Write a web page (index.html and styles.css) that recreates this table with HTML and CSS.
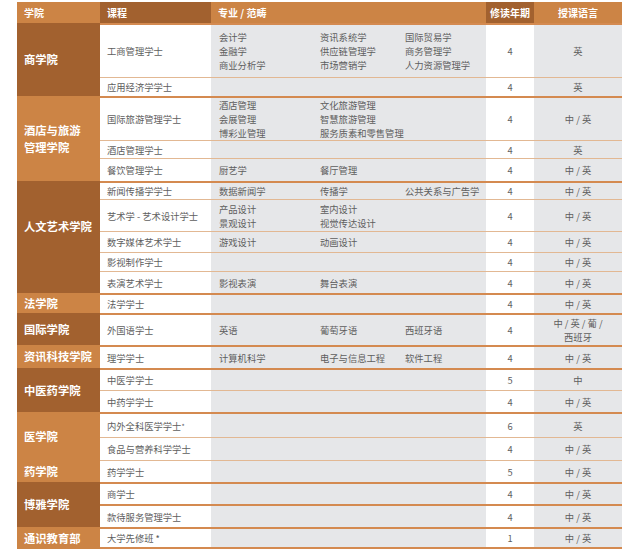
FILE: index.html
```html
<!DOCTYPE html>
<html lang="zh">
<head>
<meta charset="utf-8">
<title>课程一览</title>
<link rel="stylesheet" href="styles.css">
</head>
<body>
<div class="table">
  <div class="hd orange">学院</div>
  <div class="hd dark">课程</div>
  <div class="hd orange">专业 / 范畴</div>
  <div class="hd dark center">修读年期</div>
  <div class="hd orange center">授课语言</div>

  <div class="school dark s2">商学院</div>
  <div class="c course sep">工商管理学士</div>
  <div class="c major sep"><div class="cols"><div>会计学<br>金融学<br>商业分析学</div><div>资讯系统学<br>供应链管理学<br>市场营销学</div><div>国际贸易学<br>商务管理学<br>人力资源管理学</div></div></div>
  <div class="c yr sep">4</div>
  <div class="c lang sep">英</div>
  <div class="c course">应用经济学学士</div>
  <div class="c major"></div>
  <div class="c yr">4</div>
  <div class="c lang">英</div>

  <div class="school orange s3">酒店与旅游<br>管理学院</div>
  <div class="c course sep">国际旅游管理学士</div>
  <div class="c major sep"><div class="cols"><div>酒店管理<br>会展管理<br>博彩业管理</div><div class="nowrap">文化旅游管理<br>智慧旅游管理<br>服务质素和零售管理</div><div></div></div></div>
  <div class="c yr sep">4</div>
  <div class="c lang sep">中 / 英</div>
  <div class="c course">酒店管理学士</div>
  <div class="c major"></div>
  <div class="c yr">4</div>
  <div class="c lang">英</div>
  <div class="c course">餐饮管理学士</div>
  <div class="c major"><div class="cols"><div>厨艺学</div><div>餐厅管理</div><div></div></div></div>
  <div class="c yr">4</div>
  <div class="c lang">中 / 英</div>

  <div class="school dark s5 up">人文艺术学院</div>
  <div class="c course sep">新闻传播学学士</div>
  <div class="c major sep"><div class="cols"><div>数据新闻学</div><div>传播学</div><div>公共关系与广告学</div></div></div>
  <div class="c yr sep">4</div>
  <div class="c lang sep">中 / 英</div>
  <div class="c course">艺术学 - 艺术设计学士</div>
  <div class="c major"><div class="cols"><div>产品设计<br>景观设计</div><div>室内设计<br>视觉传达设计</div><div></div></div></div>
  <div class="c yr">4</div>
  <div class="c lang">中 / 英</div>
  <div class="c course">数字媒体艺术学士</div>
  <div class="c major"><div class="cols"><div>游戏设计</div><div>动画设计</div><div></div></div></div>
  <div class="c yr">4</div>
  <div class="c lang">中 / 英</div>
  <div class="c course">影视制作学士</div>
  <div class="c major"></div>
  <div class="c yr">4</div>
  <div class="c lang">中 / 英</div>
  <div class="c course">表演艺术学士</div>
  <div class="c major"><div class="cols"><div>影视表演</div><div>舞台表演</div><div></div></div></div>
  <div class="c yr">4</div>
  <div class="c lang">中 / 英</div>

  <div class="school orange">法学院</div>
  <div class="c course sep">法学学士</div>
  <div class="c major sep"></div>
  <div class="c yr sep">4</div>
  <div class="c lang sep">中 / 英</div>

  <div class="school dark">国际学院</div>
  <div class="c course sep">外国语学士</div>
  <div class="c major sep"><div class="cols"><div>英语</div><div>葡萄牙语</div><div>西班牙语</div></div></div>
  <div class="c yr sep">4</div>
  <div class="c lang sep">中 / 英 / 葡 /<br>西班牙</div>

  <div class="school orange">资讯科技学院</div>
  <div class="c course sep">理学学士</div>
  <div class="c major sep"><div class="cols"><div>计算机科学</div><div>电子与信息工程</div><div>软件工程</div></div></div>
  <div class="c yr sep">4</div>
  <div class="c lang sep">中 / 英</div>

  <div class="school dark s2">中医药学院</div>
  <div class="c course sep">中医学学士</div>
  <div class="c major sep"></div>
  <div class="c yr sep">5</div>
  <div class="c lang sep">中</div>
  <div class="c course">中药学学士</div>
  <div class="c major"></div>
  <div class="c yr">4</div>
  <div class="c lang">中 / 英</div>

  <div class="school orange s2">医学院</div>
  <div class="c course sep">内外全科医学学士<sup>*</sup></div>
  <div class="c major sep"></div>
  <div class="c yr sep">6</div>
  <div class="c lang sep">英</div>
  <div class="c course">食品与营养科学学士</div>
  <div class="c major"></div>
  <div class="c yr">4</div>
  <div class="c lang">中 / 英</div>

  <div class="school orange">药学院</div>
  <div class="c course">药学学士</div>
  <div class="c major"></div>
  <div class="c yr">5</div>
  <div class="c lang">中 / 英</div>

  <div class="school dark s2">博雅学院</div>
  <div class="c course sep">商学士</div>
  <div class="c major sep"></div>
  <div class="c yr sep">4</div>
  <div class="c lang sep">中 / 英</div>
  <div class="c course sep">款待服务管理学士</div>
  <div class="c major sep"></div>
  <div class="c yr sep">4</div>
  <div class="c lang sep">中 / 英</div>

  <div class="school orange">通识教育部</div>
  <div class="c course sep last">大学先修班 *</div>
  <div class="c major sep last"></div>
  <div class="c yr sep last">1</div>
  <div class="c lang sep last">中 / 英</div>
</div>
</body>
</html>
```

FILE: styles.css
```css
* { box-sizing: border-box; }

html, body {
  margin: 0;
  padding: 0;
  background: #ffffff;
}

body {
  padding: 2px 0 0 17px;
  font-family: "Noto Sans CJK SC", "Noto Sans", sans-serif;
  color: #5e5e5e;
}

.table {
  display: grid;
  width: 605px;
  grid-template-columns: 83px 111px 275px 48px 88px;
  grid-template-rows:
    21px 54px 19px 44px 18px 23px 18px 32px 21px 19px 22px
    20px 32px 23px 22px 22px 25px 23px 22px 22px 23px 22px;
}

.orange { background: #cc8445; }
.dark { background: #a2612f; }

.hd {
  display: flex;
  align-items: center;
  padding-left: 7px;
  color: #ffffff;
  font-size: 10px;
  font-weight: 700;
  white-space: nowrap;
}
.hd.center { justify-content: center; padding-left: 0; }

.school {
  display: flex;
  align-items: center;
  padding-left: 7px;
  color: #ffffff;
  font-size: 11.3px;
  font-weight: 700;
  line-height: 17px;
  white-space: nowrap;
}
.s2 { grid-row: span 2; }
.s3 { grid-row: span 3; }
.s5 { grid-row: span 5; }
.up { padding-bottom: 22px; }

.c {
  display: flex;
  align-items: center;
  font-size: 9.3px;
  line-height: 14px;
  border-top: 1px solid #e2b893;
  white-space: nowrap;
}
.c.sep { border-top: 2px solid #d48a50; }
.c.last { border-bottom: 2px solid #d48a50; }

.course { background: #ffffff; padding-left: 7px; }
.major { background: #e6e7e9; padding-left: 8px; }
.yr { background: #ffffff; justify-content: center; }
.lang { background: #e6e7e9; justify-content: center; text-align: center; }

.cols {
  display: grid;
  grid-template-columns: 101px 85px 1fr;
  width: 100%;
}
.nowrap { white-space: nowrap; }

sup {
  font-size: 7px;
  line-height: 0;
  vertical-align: 3px;
}
```
